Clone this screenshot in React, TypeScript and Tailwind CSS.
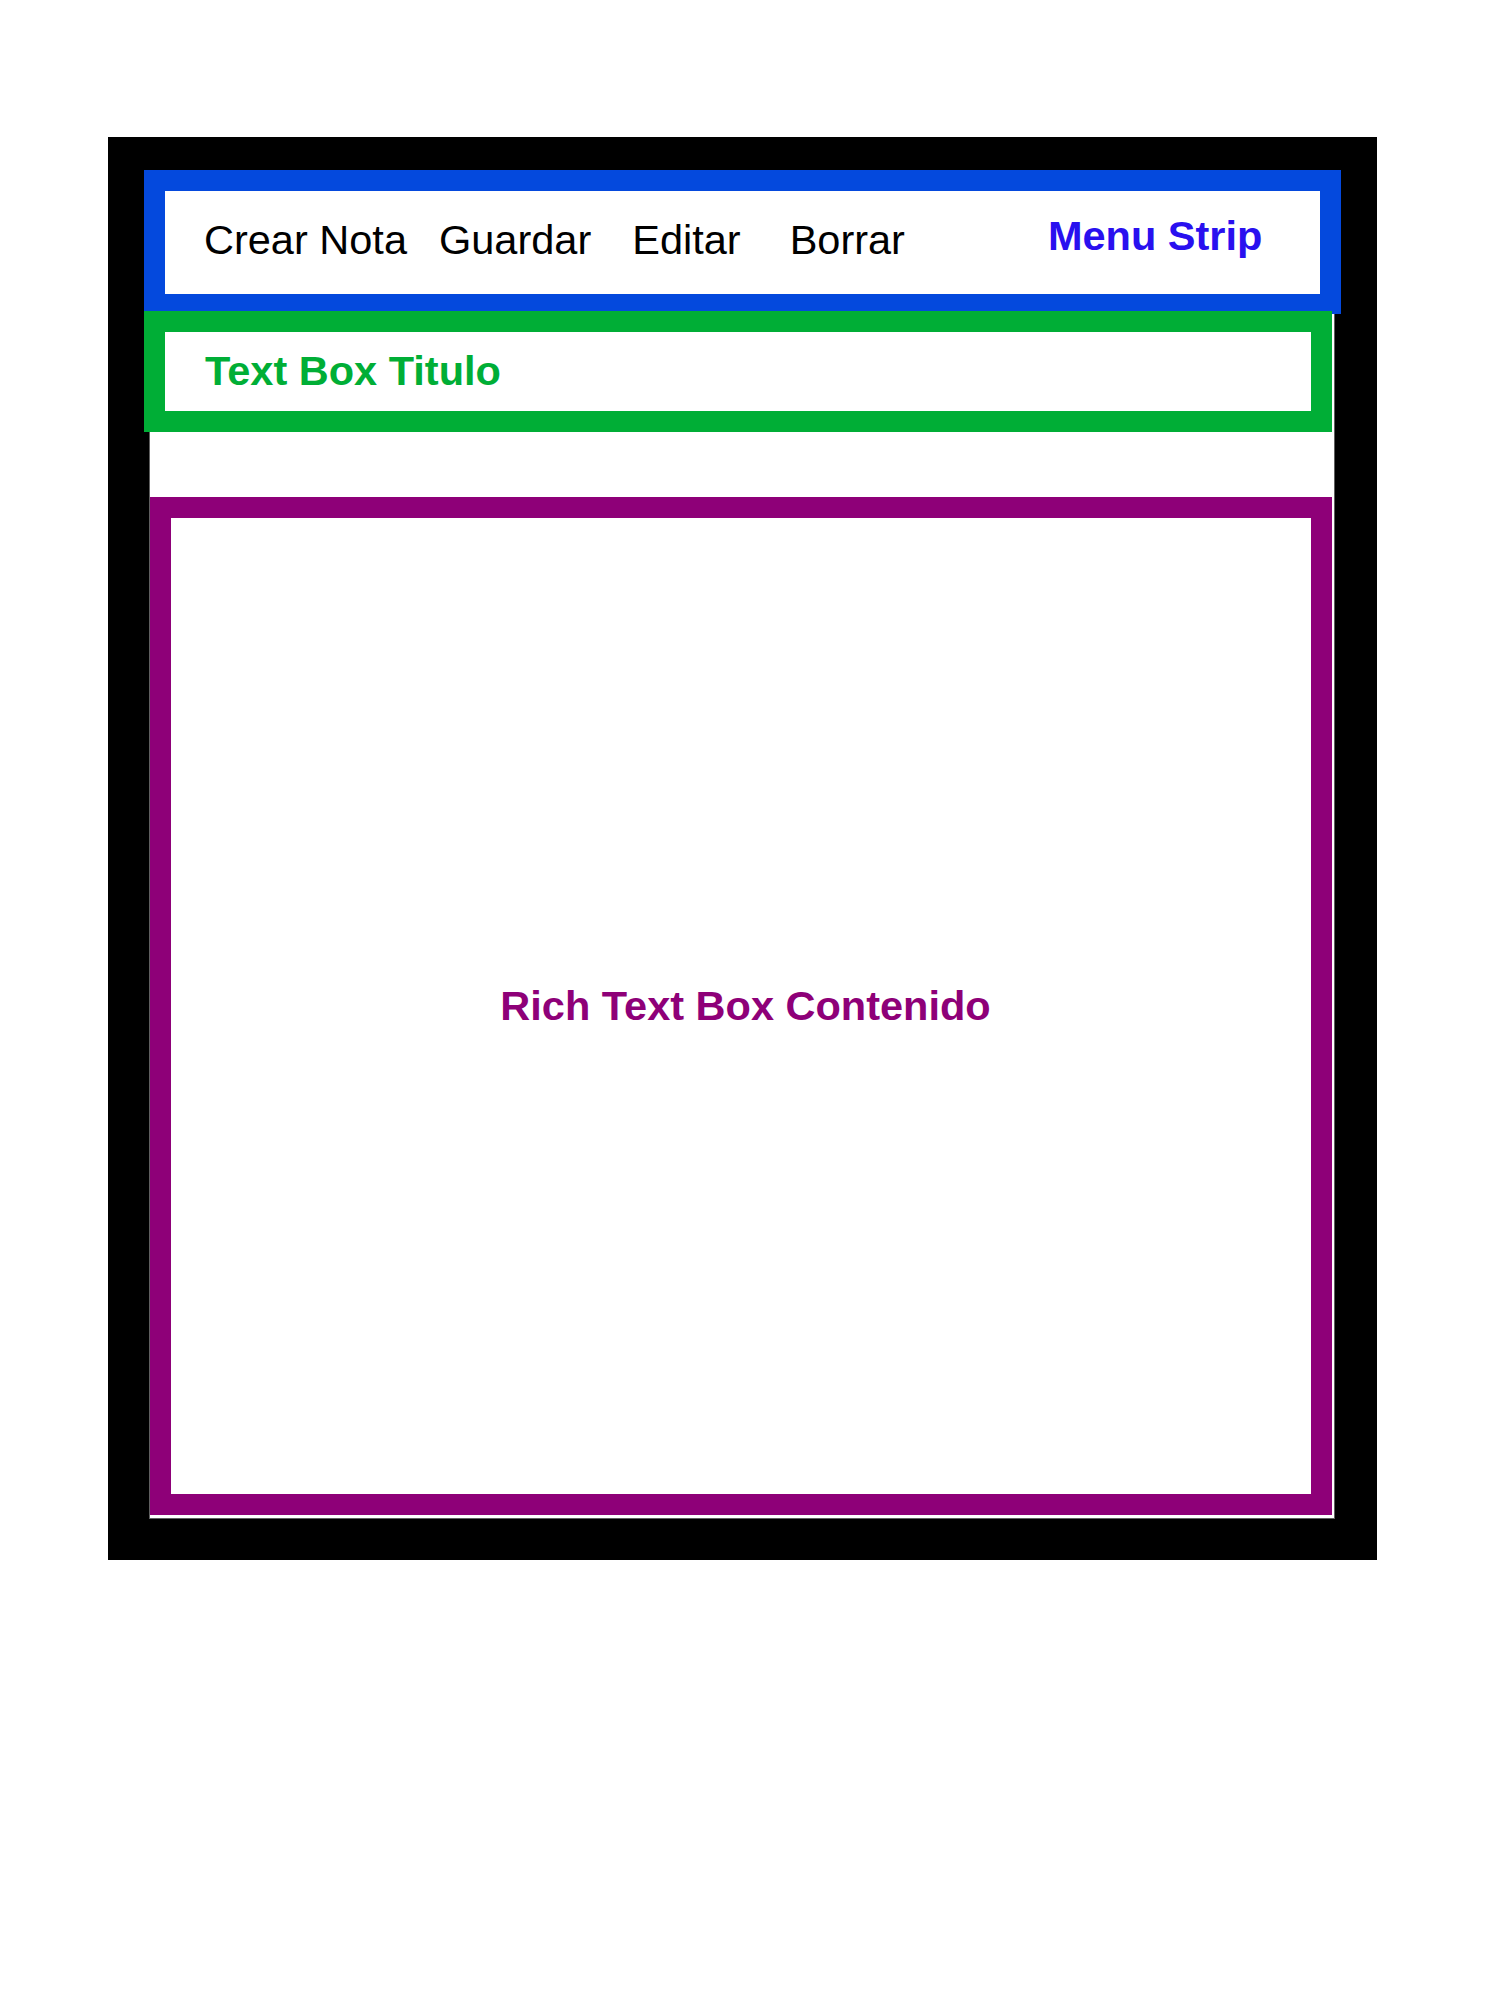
export default function App() {
  return (
    <div className="w-[1500px] h-[2000px] bg-white pt-[137px] pl-[108px] font-['Liberation_Sans',Arial,sans-serif]">
      {/* Form frame */}
      <div className="w-[1269px] h-[1423px] bg-black pt-[41px] pl-[41px]">
        <div className="w-[1186px] h-[1341px] bg-white border border-[#5f5f5f] flex flex-col">
          {/* Menu strip */}
          <div className="-mt-[9px] -ml-[6px] w-[1197px] h-[144px] shrink-0 bg-white border-[21px] border-b-[20px] border-[#0449dd] flex items-start text-[41.5px] leading-[40px] text-black">
            <span className="ml-[39px] mt-[29px] whitespace-nowrap">Crear Nota</span>
            <span className="ml-[32px] mt-[29px] whitespace-nowrap">Guardar</span>
            <span className="ml-[41px] mt-[29px] whitespace-nowrap">Editar</span>
            <span className="ml-[49px] mt-[29px] whitespace-nowrap">Borrar</span>
            <span className="ml-[143px] mt-[25px] whitespace-nowrap font-bold text-[#2910ef]">Menu Strip</span>
          </div>

          {/* Titulo */}
          <div className="-mt-[3px] -ml-[6px] w-[1188px] h-[121px] shrink-0 bg-white border-[21px] border-[#00ae36] pl-[40px] pt-[19px]">
            <p className="text-[41.5px] leading-[40px] font-bold text-[#00ae36] whitespace-nowrap">Text Box Titulo</p>
          </div>

          {/* Contenido */}
          <div className="mt-[65px] w-[1182px] h-[1018px] shrink-0 bg-white border-[21px] border-[#8e0078] pl-[9px] flex items-center justify-center">
            <p className="text-[41.5px] leading-[40px] font-bold text-[#8e0078] whitespace-nowrap">Rich Text Box Contenido</p>
          </div>
        </div>
      </div>
    </div>
  );
}
